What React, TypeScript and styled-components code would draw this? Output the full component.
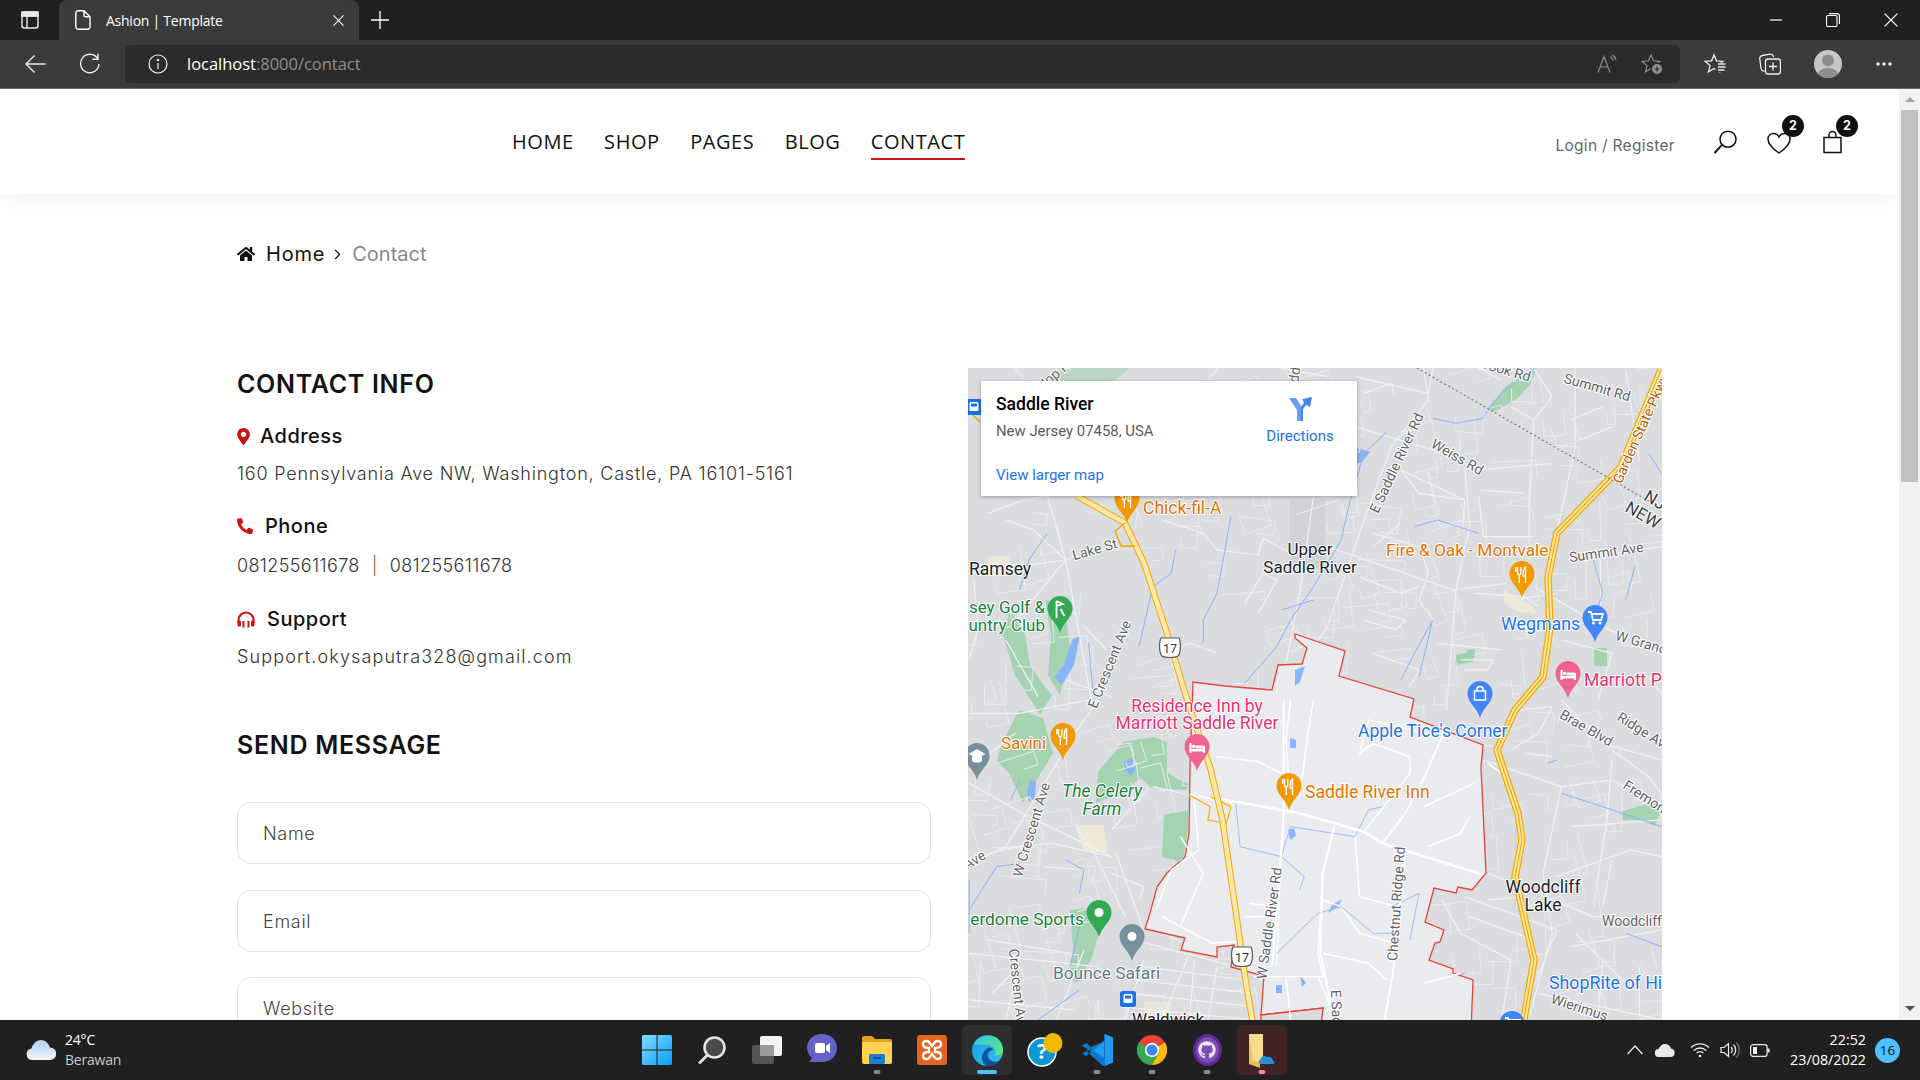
import React from "react";
import styled, { createGlobalStyle } from "styled-components";
import { FaHome, FaMapMarkerAlt, FaPhoneAlt, FaGithub } from "react-icons/fa";
import { ChevronRight } from "lucide-react";

const Global = createGlobalStyle`
  html, body { margin: 0; padding: 0; height: 100%; overflow: hidden; background: #fff; }
  * { box-sizing: border-box; }
`;
const CHROME = `"Open Sans", "Noto Sans", sans-serif`;
const SITE = `Inter, "Liberation Sans", sans-serif`;

const Shell = styled.div`display:flex;flex-direction:column;width:1920px;height:1080px;overflow:hidden;`;
const TabRow = styled.div`display:flex;align-items:stretch;height:40px;background:#202020;color:#fff;font-family:${CHROME};`;
const TabSide = styled.div`width:59px;display:flex;align-items:center;justify-content:center;`;
const Tab = styled.div`width:300px;background:#3b3b3b;border-radius:8px 8px 0 0;display:flex;align-items:center;padding:0 15px 0 16px;gap:15px;`;
const TabTitle = styled.span`flex:1;font-size:14px;letter-spacing:-.25px;white-space:nowrap;`;
const NewTab = styled.div`width:42px;display:flex;align-items:center;justify-content:center;`;
const WinControls = styled.div`margin-left:auto;display:flex;align-items:center;padding-right:22px;gap:44px;`;
const Toolbar = styled.div`height:49px;background:#3b3b3b;border-bottom:1px solid #6a6a6a;display:flex;align-items:center;font-family:${CHROME};padding-bottom:1px;`;
const NavButtons = styled.div`width:125px;display:flex;align-items:center;gap:33px;padding-left:25px;`;
const AddressBar = styled.div`width:1555px;height:38px;background:#2b2b2b;border-radius:6px;display:flex;align-items:center;padding:0 17px 0 23px;`;
const Url = styled.div`margin-left:19px;font-size:16.5px;letter-spacing:-.02px;color:#fff;flex:1;`;
const UrlMuted = styled.span`color:#8f8f8f;`;
const AddrIcons = styled.div`display:flex;align-items:center;gap:24px;`;
const ToolIcons = styled.div`display:flex;align-items:center;margin-left:24px;gap:33px;`;
const Avatar = styled.div`width:28px;height:28px;border-radius:50%;background:#c8c6c4;overflow:hidden;margin-left:33px;`;
const MoreBtn = styled.span`display:flex;margin-left:34px;`;

const Viewport = styled.div`flex:1;min-height:0;display:flex;background:#fff;`;
const Page = styled.main`width:1899px;overflow:hidden;`;
const SiteHeader = styled.header`height:105px;display:flex;align-items:center;padding:0 54px 0 512px;box-shadow:0 0 25px rgba(0,0,0,.07);position:relative;`;
const Nav = styled.nav`display:flex;gap:30.5px;padding-top:1px;`;
const NavLink = styled.a<{ $active?: boolean }>`
  position:relative;font-family:"Open Sans",sans-serif;font-size:20px;letter-spacing:.55px;color:#111;line-height:26px;
  ${p => p.$active ? `&::after{content:"";position:absolute;left:0;right:0;bottom:-5px;height:2.5px;background:#ca1515;}` : ""}
`;
const HeaderRight = styled.div`margin-left:auto;display:flex;align-items:center;gap:30px;`;
const Login = styled.a`font-family:${SITE};font-size:15.5px;color:#666;margin-right:8px;padding-top:7px;letter-spacing:.3px;`;
const HeadIcon = styled.div`position:relative;width:24px;height:24px;`;
const Badge = styled.span`position:absolute;left:15px;top:-15px;width:22px;height:22px;border-radius:50%;background:#111;color:#fff;font:700 12.5px/22px ${SITE};text-align:center;`;

const Container = styled.div`width:1425px;margin:0 auto;`;
const Crumbs = styled.div`display:flex;align-items:center;height:20px;margin-top:50px;margin-bottom:104px;font-family:${SITE};font-size:20px;color:#111;`;
const CrumbHome = styled.span`margin-left:11px;letter-spacing:.8px;font-weight:400;`;
const CrumbSep = styled.span`display:flex;margin:0 6px 0 4px;`;
const CrumbNow = styled.span`color:#888;`;
const Grid = styled.div`display:grid;grid-template-columns:694px 694px;gap:37px;`;
const LeftCol = styled.div`padding-top:1px;`;
const Heading = styled.h2<{ $top?: number }>`margin:${p => p.$top ?? 0}px 0 0;font:600 25px/30px ${SITE};color:#111;letter-spacing:.7px;`;
const Info = styled.section`margin-top:24px;`;
const InfoBlock = styled.div`margin-bottom:27.5px;`;
const Label = styled.div<{ $nudge?: number }>`display:flex;align-items:center;font:500 20px/26px ${SITE};color:#111;height:26px;margin-top:${p => -(p.$nudge ?? 0)}px;margin-bottom:${p => 12 + (p.$nudge ?? 0)}px;letter-spacing:.5px;`;
const LabelIcon = styled.span<{ $gap: number; $pull?: number }>`display:flex;color:#ca1515;margin-right:${p => p.$gap}px;margin-left:${p => p.$pull ?? 0}px;`;
const Body = styled.p<{ $ls: number }>`margin:0;font:300 18px/26px ${SITE};color:#333;letter-spacing:${p => p.$ls}px;white-space:nowrap;`;
const Sep = styled.span`color:#8a5a2a;margin:0 12px;`;
const Form = styled.form`display:flex;flex-direction:column;gap:25.5px;margin-top:42px;`;
const Field = styled.input`height:62px;width:100%;border:1.5px solid #e3e3e3;border-radius:14px;padding:1px 25px 0;font:400 18px ${SITE};outline:none;background:#fff;
  &::placeholder{color:#444;opacity:1;font-weight:300;letter-spacing:.7px;}`;
const MapBox = styled.div`position:relative;height:700px;background:#dadce0;overflow:hidden;`;
const MapSvg = styled.svg`display:block;`;
const Popup = styled.div`position:absolute;left:13px;top:13px;width:376px;height:115px;background:#fff;box-shadow:0 1px 4px rgba(0,0,0,.3);font-family:Roboto,sans-serif;padding:12px 15px;display:grid;grid-template-columns:1fr 92px;`;
const PopTitle = styled.div`font-size:17.5px;font-weight:500;color:#000;line-height:22px;`;
const PopSub = styled.div`font-size:14.9px;color:#5b5b5b;line-height:20px;margin-top:6px;`;
const PopLink = styled.a`grid-column:1 / 3;align-self:end;font-size:15px;color:#1a73e8;line-height:18px;`;
const Dir = styled.div`display:flex;flex-direction:column;align-items:center;font-size:15px;color:#1a73e8;gap:6px;padding-top:4px;margin-right:-8px;`;

const Scrollbar = styled.div`width:21px;background:#f1f1f1;display:flex;flex-direction:column;align-items:center;`;
const ArrowUp = styled.div`height:21px;padding-top:8px;&::before{content:"";display:block;border:5px solid transparent;border-top:0;border-bottom:5px solid #a3a3a3;}`;
const Thumb = styled.div`width:17px;height:372px;background:#c1c1c1;`;
const ArrowDown = styled.div`margin-top:auto;height:18px;padding-top:4px;&::before{content:"";display:block;border:5px solid transparent;border-bottom:0;border-top:5px solid #505050;}`;

const Taskbar = styled.footer`height:60px;background:#202020;display:grid;grid-template-columns:632px auto 1fr;align-items:center;color:#fff;font-family:${CHROME};`;
const Weather = styled.div`display:flex;align-items:center;padding-left:26px;gap:9px;`;
const WeatherText = styled.div`font-size:14px;line-height:20px;letter-spacing:-.2px;`;
const WeatherSub = styled.div`color:#c8c8c8;`;
const Apps = styled.div`display:flex;gap:5px;`;
const AppBtn = styled.div<{ $bg?: string }>`position:relative;width:50px;height:50px;border-radius:5px;display:flex;align-items:center;justify-content:center;background:${p => p.$bg ?? "transparent"};`;
const Dot = styled.span<{ $c?: string; $w?: number }>`position:absolute;left:50%;bottom:1px;transform:translateX(-50%);height:4px;width:${p => p.$w ?? 7}px;border-radius:2px;background:${p => p.$c ?? "#8a8a8a"};`;
const HubBadge = styled.div`width:29px;height:32px;border-radius:50%;background:#7d4cb5;border:3px solid #5b2a93;color:#efe4fa;display:flex;align-items:center;justify-content:center;`;
const Tray = styled.div`display:flex;justify-content:flex-end;align-items:center;padding-right:20px;`;
const TrayIcon = styled.div<{ $gap?: number }>`width:20px;height:20px;display:flex;align-items:center;justify-content:center;margin-right:${p => p.$gap ?? 10}px;`;
const Clock = styled.div`width:92px;text-align:right;font-size:14.3px;line-height:20px;margin-left:-6px;`;
const Notif = styled.div`width:25px;height:25px;border-radius:50%;background:#4cc2ff;color:#111;font-size:13.5px;line-height:25px;text-align:center;margin-left:9px;`;

const S = { fill: "none", stroke: "currentColor", strokeWidth: 1.4 } as const;
const STAR = "M10 2L12.5 7.800 18.800 8.400 14 12.600 15.500 18.800 10 15.500 4.500 18.800 6 12.600 1.200 8.400 7.500 7.800Z";

const SideIcon = () => <svg width="20" height="20" viewBox="0 0 20 20" {...S} stroke="#e8e8e8"><rect x="2" y="2" width="16" height="16" rx="2.5"/><path d="M2 6h16M7 6v12" /><rect x="2" y="2" width="16" height="4" fill="#e8e8e8"/></svg>;
const DocIcon = () => <svg width="16" height="20" viewBox="0 0 16 20" {...S}><path d="M3 .8h6l6 6v10a2.4 2.4 0 0 1-2.4 2.4H3A2.4 2.4 0 0 1 .8 17V3A2.4 2.4 0 0 1 3 .8zM9 .8v4.4a1.6 1.6 0 0 0 1.6 1.6H15"/></svg>;
const Cross = ({ s = 12 }: { s?: number }) => <svg width={s} height={s} viewBox="0 0 12 12" {...S} strokeWidth={1.1}><path d="M.5.5l11 11M11.5.5l-11 11"/></svg>;
const Plus = () => <svg width="18" height="18" viewBox="0 0 18 18" {...S} strokeWidth={1.3}><path d="M9 0v18M0 9h18"/></svg>;
const Minus = () => <svg width="14" height="14" viewBox="0 0 14 14" {...S} strokeWidth={1.2}><path d="M2 7h12"/></svg>;
const Restore = () => <svg width="14" height="14" viewBox="0 0 14 14" {...S} strokeWidth={1.1}><rect x=".5" y="2.5" width="10.5" height="11" rx="1.5"/><path d="M3 .6h8a2.4 2.4 0 0 1 2.4 2.4v8"/></svg>;
const Back = () => <svg width="21" height="20" viewBox="0 0 21 20" {...S} stroke="#eee"><path d="M20.5 10H1M9.5 1.5L1 10l8.5 8.5"/></svg>;
const Refresh = () => <svg width="21" height="22" viewBox="0 0 21 22" {...S} stroke="#eee"><path d="M18.6 5.6A9.2 9.2 0 1 0 20 11M19 .8v5.4h-5.6"/></svg>;
const InfoI = () => <svg width="20" height="20" viewBox="0 0 20 20" {...S} stroke="#eee" strokeWidth={1.2}><circle cx="10" cy="10" r="9"/><path d="M10 9v6"/><circle cx="10" cy="6" r=".6" fill="#eee"/></svg>;
const ReadAloud = () => <svg width="20" height="20" viewBox="0 0 20 20" {...S} stroke="#8e8e8e" strokeWidth={1.2}><path d="M1 18.5L7 2.5l6 16M3 13h8M13 2.5a6 6 0 0 1 3 4M15 .8a8 8 0 0 1 4 5.2"/></svg>;
const StarPlus = () => <svg width="22" height="22" viewBox="0 0 22 22" {...S} stroke="#8e8e8e" strokeWidth={1.2}><path d={STAR}/><circle cx="16" cy="16" r="6.500" fill="#2b2b2b" stroke="none"/><circle cx="16" cy="16" r="5" fill="#8e8e8e" stroke="none"/><path d="M16 13.600v4.800M13.600 16h4.800" stroke="#2b2b2b"/></svg>;
const FavList = () => <svg width="22" height="22" viewBox="0 0 22 22" {...S} stroke="#f0f0f0" strokeWidth={1.3}><path d={STAR}/><rect x="11.500" y="9.800" width="11" height="9.500" fill="#3b3b3b" stroke="none"/><path d="M14 11h7.500M14 14h7.500M14 17h6.500"/></svg>;
const Collections = () => <svg width="22" height="22" viewBox="0 0 22 22" {...S} stroke="#f0f0f0" strokeWidth={1.3}><path d="M5.500 18A3 3 0 0 1 2 15.500L.8 6A3 3 0 0 1 3.500 2.500L11 1.200A3 3 0 0 1 14.500 4"/><rect x="6.500" y="6" width="15" height="15" rx="2.500"/><path d="M14 9.500v8M10 13.500h8"/></svg>;
const Dots = () => <svg width="16" height="4" viewBox="0 0 16 4" fill="#eee"><circle cx="2" cy="2" r="1.700"/><circle cx="8" cy="2" r="1.700"/><circle cx="14" cy="2" r="1.700"/></svg>;
const AvatarArt = () => <svg width="28" height="28" viewBox="0 0 28 28"><circle cx="14" cy="10.500" r="6" fill="#8f8d8b"/><ellipse cx="14" cy="25" rx="10.500" ry="7" fill="#8f8d8b"/></svg>;

const Search = () => <svg width="24" height="24" viewBox="0 0 24 24" fill="none" stroke="#111" strokeWidth="1.500"><circle cx="15" cy="9.200" r="8"/><path d="M9 14.800L1.500 23" strokeWidth="2"/></svg>;
const Heart = () => <svg width="24" height="24" viewBox="0 0 24 24" fill="none" stroke="#111" strokeWidth="1.500"><path d="M12 23C6 19 1 14.500 1 9 1 5.500 3.500 3.500 6.500 3.500 9 3.500 11 5 12 7 13 5 15 3.500 17.500 3.500 20.500 3.500 23 5.500 23 9 23 14.500 18 19 12 23z"/></svg>;
const Bag = () => <svg width="24" height="24" viewBox="0 0 24 24" fill="none" stroke="#111" strokeWidth="1.500"><path d="M3 7.500h17v15H3zM8 7.500V5a3.500 3.500 0 0 1 7 0v2.500"/></svg>;
const Headset = () => <svg width="18" height="17" viewBox="0 0 18 17" fill="none" stroke="#ca1515" strokeWidth="2.200"><path d="M1.500 12V9a7.500 7.500 0 0 1 15 0v3"/><rect x=".5" y="9.500" width="3.500" height="6" rx="1.500" fill="#ca1515" stroke="none"/><rect x="14" y="9.500" width="3.500" height="6" rx="1.500" fill="#ca1515" stroke="none"/><path d="M6.500 10v6.500M11.500 10v6.500" strokeWidth="2"/></svg>;

const Street = ({ d, c = "#eef0f2", w = 1.2 }: { d: string; c?: string; w?: number }) =>
  <polyline points={d} fill="none" stroke={c} strokeWidth={w} vectorEffect="non-scaling-stroke" strokeLinejoin="round" />;

const RESIDENTIAL: string[] = (() => {
  const out: string[] = [];
  let seed = 20220823;
  const rnd = () => { seed = (seed * 1664525 + 1013904223) % 4294967296; return seed / 4294967296; };
  for (let i = 0; i < 320; i++) {
    const x = 968 + rnd() * 694, y = 368 + rnd() * 660;
    const a = (rnd() < .5 ? -.35 : 1.2) + rnd() * .5;
    const l1 = 14 + rnd() * 34, l2 = 8 + rnd() * 22, l3 = rnd() * 24;
    const ca = Math.cos(a), sa = Math.sin(a);
    const x2 = x + ca * l1, y2 = y + sa * l1;
    const x3 = x2 - sa * l2, y3 = y2 + ca * l2;
    const x4 = x3 - ca * l3, y4 = y3 - sa * l3;
    out.push(`${x.toFixed(1)},${y.toFixed(1)} ${x2.toFixed(1)},${y2.toFixed(1)} ${x3.toFixed(1)},${y3.toFixed(1)} ${x4.toFixed(1)},${y4.toFixed(1)}`);
  }
  return out;
})();

const Z4STREETS = [
  "190,408 230,600 290,1050","20,640 230,600 340,555","230,600 170,700 110,800","440,480 530,520 560,570 650,585 660,535 720,580 800,560 1075,690 1190,670",
  "770,408 740,700 690,1050","880,480 800,800 775,850","1010,25 1020,120 940,260 880,480","860,200 1030,270 1130,330 1290,310","1100,330 1110,500 1080,690 1060,1050",
  "1130,410 1140,530 1250,530","960,330 1100,420","900,520 1000,560 1020,640 1000,720 1030,780","1250,25 1290,110 1250,180 1240,400 1240,600","1340,30 1340,260 1300,520",
  "1450,30 1480,300","1320,600 1528,560","1250,680 1400,800 1528,880","120,25 140,60","560,25 540,60","700,25 800,50","860,50 1020,100 1030,25","880,100 940,70 945,105",
  "1130,25 1180,60","1200,140 1250,180","1330,180 1400,140","1350,240 1420,200","620,730 660,640 690,660 650,760","1120,700 1230,710 1260,740","1040,850 1180,870","60,460 140,420 190,408",
  "100,480 160,510 230,600","30,660 40,800 20,900","230,960 330,1010","270,800 320,870","100,840 170,1010","440,880 500,850 560,880","900,560 960,490","870,650 960,700 1000,680","890,750 970,780 950,810 880,780",
  "900,880 1000,930 980,980","1090,900 1160,900 1150,930 1100,930","960,330 1000,400 1100,420 1095,500","1130,390 1230,400","1310,840 1420,880 1390,1020","1500,950 1528,1000","1395,600 1395,800","1200,720 1300,700"
];
const Z4WATER = [
  "1030,175 1080,190 1140,175","930,215 880,280 850,420 830,540 770,680 720,780 690,860 620,970","990,500 1040,480 1130,520","470,570 460,640 420,680 410,740 390,860","590,470 560,700 530,780 530,850",
  "190,520 150,600 130,690","1500,280 1528,340","1380,600 1400,700 1390,740","1470,620 1450,720","1030,780 990,880 960,960","1320,480 1290,520","1250,25 1180,100 1140,170","280,850 290,1000","700,750 770,720","1000,950 1028,790"
];
const Z5STREETS = [
  "300,0 250,100 100,440 20,490","20,250 150,350 330,470","420,260 500,285","330,390 410,265","20,480 120,440 200,430 330,470","340,460 400,690","250,370 300,480 360,650","180,500 270,510","330,520 400,560 390,600",
  "60,720 240,760","130,770 100,960","20,760 300,800","270,750 210,960","380,720 600,800","400,780 360,960","440,700 490,730","500,760 440,960","510,780 500,960","560,800 540,960","400,800 620,840","380,840 640,880","370,880 640,920","350,920 640,960",
  "120,810 70,880","20,900 250,930","1140,180 1310,260 1420,240 1528,310","1310,260 1270,520 1290,700 1240,950","1420,180 1410,350 1380,620","1150,520 1380,650 1528,660","1100,590 1300,690 1220,960","1050,600 1090,700 1200,780 1180,960",
  "1110,650 1230,710","1310,0 1400,130 1528,180","1430,40 1528,130","1300,530 1460,450 1528,470","1260,880 1528,960","1340,700 1450,850","1330,740 1528,690","1480,800 1480,950","1400,780 1390,950","1200,150 1260,100 1290,20 1220,30","1230,160 1290,170",
  "20,40 130,40 280,0","120,100 20,210","1420,150 1500,230 1528,280","1330,380 1528,360","1420,480 1400,620","1150,600 1230,590"
];
const Z5INNER = [
  "430,620 460,510 520,450 510,300","480,680 530,520 480,410","440,650 550,730 600,725","630,610 690,620 680,650 620,650","690,800 700,420","720,310 710,120 720,0","770,0 760,80 740,290","560,170 650,185 700,220",
  "640,830 790,830 780,760 790,520 815,380","790,760 890,790 930,840","710,830 720,960","780,830 810,930","870,590 950,620","870,160 900,130 980,170 980,220 900,360 880,395","870,160 890,60 1050,110","1010,320 1120,250",
  "860,400 870,590","1020,440 1090,400 1110,350","790,600 830,620 870,700 950,730","1010,850 1090,820","1150,190 1180,220"
];
const Z5WATER = [
  "20,630 80,500 130,490","230,480 270,510 260,580","130,240 110,300","600,300 610,440 700,470 750,530 740,570","700,470 720,380 860,410 890,330 920,320","690,760 780,640 830,620 900,700 940,700","940,620 1000,580 980,720",
  "1020,450 1110,400 1110,350","560,220 600,290","790,240 830,140 870,100","1010,860 1100,820","1310,280 1400,320 1528,380","1450,700 1528,740","20,540 20,700","260,680 240,800","170,960 260,870","1280,190 1300,180","720,0 740,60 770,40"
];

const Pin = ({ x, y, c, g }: { x: number; y: number; c: string; g: "fork" | "hotel" | "cart" | "bag" | "golf" | "grad" | "dot" }) => (
  <g transform={`translate(${x - 12.5} ${y - 37})`}>
    <path d="M12.500 37C10 27 0 22 0 12.500a12.500 12.500 0 0 1 25 0C25 22 15 27 12.500 37z" fill={c} />
    {g === "fork" && <path d="M8 6v5c0 2 1 3 1.800 3v8M6.300 6v5M11.300 6v5c0 2-.7 3-1.500 3M16 6c-2 1-2.500 4-2.500 9H16v7z" stroke="#fff" strokeWidth="1.400" fill="none" />}
    {g === "hotel" && <g fill="#fff"><rect x="5" y="9" width="2" height="10"/><rect x="5" y="15" width="15" height="2.500"/><rect x="18.500" y="12" width="2" height="7"/><rect x="11" y="11.500" width="8" height="3"/><circle cx="9" cy="12.500" r="1.800"/></g>}
    {g === "cart" && <path d="M5.500 7h3l2 8h8l2-6H9.500" stroke="#fff" strokeWidth="1.800" fill="none" />}
    {g === "cart" && <g fill="#fff"><circle cx="11" cy="18" r="1.600"/><circle cx="17.500" cy="18" r="1.600"/></g>}
    {g === "bag" && <path d="M7 10h11v9H7zM9.500 10V8.500a3 3 0 0 1 6 0V10" stroke="#fff" strokeWidth="1.600" fill="none" />}
    {g === "golf" && <path d="M9 5v17M9 5l6 3-6 2M13 13l4 7" stroke="#fff" strokeWidth="1.800" fill="none" />}
    {g === "grad" && <path d="M12.500 6L4 11l8.500 5 8.500-5zM7.500 14v4c3 2 7 2 10 0v-4" fill="#fff" />}
    {g === "dot" && <circle cx="12.500" cy="12.500" r="4.500" fill="#fff" />}
  </g>
);
const Shield = ({ x, y }: { x: number; y: number }) => (
  <g>
    <path d={`M${x - 9} ${y - 10}h18c2 4 2 15-1 18-3 2-13 2-16 0-3-3-3-14-1-18z`} fill="#fff" stroke="#555" strokeWidth="1.200" />
    <text x={x} y={y + 5} fontFamily="Roboto,sans-serif" fontSize="12.500" textAnchor="middle" fill="#333">17</text>
  </g>
);
const Transit = ({ x, y }: { x: number; y: number }) => (
  <g>
    <rect x={x - 8} y={y - 8} width="16" height="16" rx="2.500" fill="#1a73e8" />
    <rect x={x - 4.500} y={y - 5} width="9" height="9" rx="1.500" fill="#fff" />
    <rect x={x - 3} y={y - 3.500} width="6" height="3" fill="#1a73e8" />
  </g>
);
type L = [number, number, string, string, number, ("start" | "middle" | "end")?];
const DARK = "#202124", GREY = "#5f6368", ORG = "#e37400", PINK = "#e8336f", BLUE = "#1a73e8", GRN = "#188038", SLATE = "#5b7686";
const LABELS: L[] = [
  [1143, 514, "Chick-fil-A", ORG, 17.5],
  [1310, 555, "Upper", DARK, 17, "middle"],
  [1310, 573, "Saddle River", DARK, 17, "middle"],
  [969, 575, "Ramsey", DARK, 17.5],
  [1386, 556, "Fire & Oak - Montvale", ORG, 17.3],
  [1501, 630, "Wegmans", BLUE, 17.8],
  [1584, 686, "Marriott P", PINK, 17.5],
  [1045, 613, "sey Golf &", GRN, 17, "end"],
  [1045, 631, "untry Club", GRN, 17, "end"],
  [1197, 712, "Residence Inn by", PINK, 17.5, "middle"],
  [1197, 729, "Marriott Saddle River", PINK, 17.5, "middle"],
  [1001, 749, "Savini", ORG, 17],
  [1305, 798, "Saddle River Inn", ORG, 17.5],
  [1358, 737, "Apple Tice's Corner", BLUE, 17.5],
  [1543, 893, "Woodcliff", DARK, 17.5, "middle"],
  [1543, 911, "Lake", DARK, 17.5, "middle"],
  [1602, 926, "Woodcliff A", GREY, 14],
  [1084, 925, "erdome Sports", GRN, 17.3, "end"],
  [1053, 979, "Bounce Safari", SLATE, 17.3],
  [1549, 989, "ShopRite of Hi", BLUE, 17.8],
  [1168, 1025, "Waldwick", DARK, 17, "middle"],
];
const RLABELS: [number, number, number, string, string, number?][] = [
  [1096, 554, -16, "Lake St", GREY],
  [1114, 666, -68, "E Crescent Ave", GREY],
  [1401, 465, -65, "E Saddle River Rd", GREY],
  [1455, 461, 30, "Weiss Rd", GREY],
  [1596, 392, 16, "Summit Rd", GREY],
  [1607, 557, -8, "Summit Ave", GREY],
  [1645, 431, -66, "Garden State Pkwy", "#b06000"],
  [1299, 378, -82, "Saddle", GREY],
  [1059, 377, -40, "Hop Rd", GREY],
  [1502, 374, 16, "Brook Rd", GREY],
  [1640, 647, 16, "W Grand", GREY],
  [1584, 732, 30, "Brae Blvd", GREY],
  [1642, 736, 32, "Ridge Ave", GREY],
  [1644, 802, 33, "Fremont", GREY],
  [1578, 1012, 18, "Wierimus", GREY],
  [1036, 831, -73, "W Crescent Ave", GREY],
  [977, 864, -32, "Ave", GREY],
  [1013, 990, 84, "Crescent Ave", GREY],
  [1274, 924, -82, "W Saddle River Rd", GREY],
  [1401, 904, -86, "Chestnut Ridge Rd", GREY],
  [1332, 1017, 88, "E Saddle", GREY],
  [1652, 505, 30, "NJ", "#3c4043", 17],
  [1640, 520, 30, "NEW", "#3c4043", 17],
];
const HW17 = "M1077 496L1125 523 1144 563 1167 633 1185 693 1194 720 1210 767 1222 817 1238 927 1245 977 1254 1030";
const GSP = "M1661 370L1621 467 1557 533 1548 577 1550 627 1543 677 1515 710 1497 750 1518 813 1522 840 1515 877 1534 960 1522 1030";

const MapArt = () => (
  <MapSvg width="694" height="700" viewBox="968 368 694 700">
    <rect x="968" y="368" width="694" height="700" fill="#dadce0" />
    <g fill="#a5d3b2">
      <path d="M1010 610l15 25 5 30 12 18 10 12-12 20-25-40-12-40z" />
      <path d="M1045 600l20 5 5 45-10 45-12-20 3-40z" />
      <path d="M1488 408l18-22 22-14 8-4-4 14-14 16-24 14z" />
      <path d="M1455 655l18-3v10l-18 3zM1467 650l8-1v8h-8z" fill="#9fd0ae"/>
      <path d="M1594 648h13v18h-13z" />
      <path d="M1001 745l18-35 24 8 10 35-30 50-14-30-12-12z" />
      <path d="M1098 772l25-30 30-5 14 5v30l12 8 10 4-3 6-35-2-10-10-20 15-25 10z" />
      <path d="M1070 910l18-2 12 20-8 30-15 25-8-5 4-30z" />
      <path d="M1060 368h70l-15 12-30 8-25-2z" fill="#bcd7c7"/>
      <path d="M1620 812l20-6 15-4 5 10-5 14-15-6-18 0z" />
    </g>
    <g fill="#8ab4f8">
      <path d="M1072 640l-8 25-10 12 8 8 12-20 6-30z" />
      <path d="M1030 780l6 2-1 16-6 4-2-10z" />
      <path d="M1124 762l8-4 5 8-6 10-6-6z" />
      <path d="M1340 458l18-10 12 4-8 10-14 4z" />
    </g>
    <path d="M1075 825h28l5 27h-24z" fill="#efe8d5" />
    <path d="M1144 1002h27v20h-27zM987 557l22-2 2 20-22 2z" fill="#efe8d5" opacity=".8" />
    <path d="M1504 590l28 16 6 8-20-2-14-10z" fill="#efe8d5" />
    <rect x="1290" y="500" width="35" height="70" fill="#d0d2d6" />
    {RESIDENTIAL.map((d, i) => <Street key={i} d={d} c="#e8eaed" w={1} />)}
    <g transform="translate(960 360) scale(.4591 .3333)">
      {Z4STREETS.map((d, i) => <Street key={i} d={d} />)}
      {Z4WATER.map((d, i) => <Street key={i} d={d} c="#8ab4f8" w={1} />)}
    </g>
    <g transform="translate(960 700) scale(.4591 .3333)">
      {Z5STREETS.map((d, i) => <Street key={i} d={d} />)}
      {Z5WATER.map((d, i) => <Street key={i} d={d} c="#8ab4f8" w={1} />)}
    </g>
    <path
      d="M1295 634L1345 651 1339 676 1414 699 1410 717 1483 745 1481 767 1486 873 1472 890 1458 887 1456 893 1434 888 1425 922 1444 930 1440 942 1435 943 1429 960 1453 969 1453 973 1473 980 1470 1060 1300 1060 1323 1008 1261 1015 1264 976 1231 967 1234 945 1217 947 1217 957 1181 950 1185 938 1145 929 1150 913 1157 887 1167 873 1185 857 1189 833 1190 767 1193 682 1225 686 1272 690 1278 665 1302 664 1307 648 1295 638z"
      fill="#e9ebee" stroke="#ea4335" strokeWidth="1.300" />
    <path d="M1323 1008l-2 18h-60l0-11z" fill="#dadce0" stroke="#ea4335" strokeWidth="1.300" />
    <g fill="#a5d3b2"><path d="M1164 815l25-5-2 30-5 22-20-5z" /></g>
    <g fill="#8ab4f8"><path d="M1290 738l6 2v8h-6zM1288 830l6-2 2 8-6 4zM1300 975l6 8-4 4zM1276 985l6 0v8h-6zM1332 905l10-6-4 8-10 6zM1295 670l10-4-5 16-5 4z" /></g>
    <g transform="translate(960 700) scale(.4591 .3333)">
      {Z5INNER.map((d, i) => <Street key={i} d={d} c="#fff" w={1.400} />)}
      {Z5WATER.slice(3, 7).map((d, i) => <Street key={i} d={d} c="#9cc0f9" w={1} />)}
      <Street d="500,285 620,310 740,340 880,395 920,430 1140,525" c="#fff" w={2.600} />
      <Street d="920,430 970,340 1010,235 1050,110" c="#fff" w={1.800} />
      <Street d="970,450 945,800 925,960" c="#fff" w={1.800} />
      <Street d="705,0 705,340 700,450 680,800" c="#fff" w={2} />
      <Street d="815,380 790,520 785,760 810,930" c="#fff" w={2} />
      <Street d="500,285 545,320 540,360 580,370 590,320 545,290" c="#f9ab00" w={1.200} />
    </g>
    <g fill="none" strokeLinejoin="round">
      <path d={HW17} stroke="#f2a900" strokeWidth="6.500" />
      <path d={HW17} stroke="#fbe7a8" strokeWidth="4.500" />
      <path d="M968 410L980 422 M1125 523l-10 8 6 15 14 0" stroke="#f2a900" strokeWidth="1.400" />
      <path d={GSP} stroke="#f2a900" strokeWidth="7.500" />
      <path d={GSP} stroke="#fbe7a8" strokeWidth="5" />
      <path d={GSP} stroke="#f2a900" strokeWidth="1.200" />
      <path d="M1417 368L1661 508" stroke="#70757a" strokeWidth="1.100" strokeDasharray="2 2.500" />
    </g>
    <Shield x={1170} y={648} />
    <Shield x={1242} y={957} />
    <Transit x={974} y={407} />
    <Transit x={1128} y={999} />
    <Pin x={1127} y={523} c="#f29900" g="fork" />
    <Pin x={1522} y={598} c="#f29900" g="fork" />
    <Pin x={1595} y={642} c="#4285f4" g="cart" />
    <Pin x={1060} y={633} c="#34a853" g="golf" />
    <Pin x={1568} y={698} c="#f06292" g="hotel" />
    <Pin x={1480} y={718} c="#4285f4" g="bag" />
    <Pin x={1063} y={760} c="#f29900" g="fork" />
    <Pin x={977} y={780} c="#78909c" g="grad" />
    <Pin x={1197} y={771} c="#f06292" g="hotel" />
    <Pin x={1289} y={810} c="#f29900" g="fork" />
    <Pin x={1099} y={937} c="#34a853" g="dot" />
    <Pin x={1132} y={961} c="#78909c" g="dot" />
    <Pin x={1512} y={1048} c="#4285f4" g="cart" />
    <g fontFamily="Roboto, sans-serif" stroke="#fff" strokeWidth="2" paintOrder="stroke" strokeLinejoin="round">
      {LABELS.map(([x, y, t, c, s, a], i) => <text key={i} x={x} y={y} fill={c} fontSize={s} textAnchor={a ?? "start"}>{t}</text>)}
      <text x={1102} y={797} fill={GRN} fontSize="17.500" fontStyle="italic" textAnchor="middle">The Celery</text>
      <text x={1102} y={815} fill={GRN} fontSize="17.500" fontStyle="italic" textAnchor="middle">Farm</text>
      {RLABELS.map(([x, y, r, t, c, s], i) => <text key={i} transform={`rotate(${r} ${x} ${y})`} x={x} y={y} fill={c} fontSize={s ?? 14} textAnchor="middle">{t}</text>)}
    </g>
  </MapSvg>
);

const WinLogo = () => <svg width="30" height="30" viewBox="0 0 30 30"><defs><linearGradient id="w" x1="0" y1="0" x2="1" y2="1"><stop offset="0" stopColor="#7fdcff"/><stop offset="1" stopColor="#0a9cf5"/></linearGradient></defs><path d="M0 1.500A1.500 1.500 0 0 1 1.500 0h13v14.500H0zM15.500 0h13A1.500 1.500 0 0 1 30 1.500v13H15.500zM0 15.500h14.500V30h-13A1.500 1.500 0 0 1 0 28.500zM15.500 15.500H30v13a1.500 1.500 0 0 1-1.500 1.500h-13z" fill="url(#w)"/></svg>;
const TaskSearch = () => <svg width="28" height="28" viewBox="0 0 28 28" fill="none"><circle cx="16.500" cy="11.500" r="10" fill="#4a4a4a" stroke="#e3e3e3" strokeWidth="2.600"/><path d="M9.500 19L2 26.500" stroke="#e3e3e3" strokeWidth="3" strokeLinecap="round"/></svg>;
const TaskView = () => <svg width="30" height="28" viewBox="0 0 30 28"><rect x="0" y="9" width="22" height="19" rx="2" fill="#555"/><rect x="8" y="0" width="22" height="20" rx="2" fill="#f4f4f4"/><rect x="8" y="9" width="14" height="11" fill="#9a9a9a"/></svg>;
const Teams = () => <svg width="30" height="32" viewBox="0 0 30 32"><path d="M15 0c8.500 0 15 6 15 14s-6.500 14-15 14H2l3-4C2 21 0 18 0 14 0 6 6.500 0 15 0z" fill="#6264c8"/><rect x="8" y="9" width="10" height="10" rx="2" fill="#fff"/><path d="M19 12l4-3v10l-4-3z" fill="#fff"/></svg>;
const Explorer = () => <svg width="30" height="28" viewBox="0 0 30 28"><path d="M0 2a2 2 0 0 1 2-2h8l3 3h15a2 2 0 0 1 2 2v4H0z" fill="#e0a21c"/><path d="M0 6h30v20a2 2 0 0 1-2 2H2a2 2 0 0 1-2-2z" fill="#ffd34f"/><rect x="7" y="18" width="16" height="10" rx="1.500" fill="#1a7fd4"/><rect x="11" y="21" width="8" height="2" fill="#0d4f8f"/></svg>;
const Xampp = () => <svg width="30" height="30" viewBox="0 0 30 30"><rect width="30" height="30" rx="3" fill="#e2641f"/><path d="M6 9c0-3 4-4 6-2l3 4 3-4c2-2 6-1 6 2s-2 4-5 4h-1v4h1c3 0 5 1 5 4s-4 4-6 2l-3-4-3 4c-2 2-6 1-6-2s2-4 5-4h1v-4h-1c-3 0-5-1-5-4z" fill="none" stroke="#fff" strokeWidth="2.400"/></svg>;
const Edge = () => <svg width="31" height="31" viewBox="0 0 31 31"><defs><linearGradient id="e1" x1="0" y1="0" x2="1" y2="0"><stop offset="0" stopColor="#0c59a4"/><stop offset="1" stopColor="#114a8b"/></linearGradient><linearGradient id="e2" x1="0" y1="0" x2="1" y2="1"><stop offset="0" stopColor="#1b9de2"/><stop offset="1" stopColor="#35c1f1"/></linearGradient><linearGradient id="e3" x1="0" y1="0" x2="1" y2="1"><stop offset="0" stopColor="#35c1f1"/><stop offset="1" stopColor="#66eb6e"/></linearGradient></defs><circle cx="15.500" cy="15.500" r="15.500" fill="url(#e2)"/><path d="M2 9C6 1 16-1 23 2c5 2 8 8 8 13 0 4-4 6-8 5 2-4-1-10-7-10C10 9 5 10 2 9z" fill="url(#e3)"/><path d="M15 31c-7-2-7-14 1-18 2-1 5 0 5 2-3 0-6 3-5 7 1 3 5 6 11 4-3 3-7 6-12 5z" fill="url(#e1)"/></svg>;
const Help = () => <svg width="42" height="34" viewBox="-6 0 42 34"><circle cx="15" cy="19" r="14" fill="#0b97d4" stroke="#fff" strokeWidth="1.500"/><text x="15" y="26" fontFamily="Open Sans,sans-serif" fontWeight="700" fontSize="21" textAnchor="middle" fill="#fff">?</text><ellipse cx="26" cy="10" rx="9.500" ry="10" fill="#f5b800"/></svg>;
const VSCode = () => <svg width="31" height="32" viewBox="0 0 31 32"><path d="M23 0l8 3.500v25L23 32 8 17l15-11z" fill="#1f9cf0"/><path d="M23 0v32l-1-1V1z" fill="#0b6fc0"/><path d="M23 7L9 18l-5 4L0 19.500 6 16 0 11.500 4 9l5 4zM23 25L10 15 5 17.500 21 32l2-1z" fill="#0e78c8"/></svg>;
const Chrome = () => <svg width="30" height="30" viewBox="0 0 30 30"><circle cx="15" cy="15" r="15" fill="#ea4335"/><path d="M15 15L2 7.500A15 15 0 0 0 15 30l7.500-13z" fill="#34a853"/><path d="M15 15l13-7.500A15 15 0 0 1 15 30l7.500-13z" fill="#fbbc04"/><circle cx="15" cy="15" r="7.200" fill="#fff"/><circle cx="15" cy="15" r="5.500" fill="#4285f4"/></svg>;
const Folder2 = () => <svg width="26" height="36" viewBox="0 0 26 36"><path d="M0 2l11 3v31L0 32z" fill="#e8c25e"/><path d="M0 2h14v27H4z" fill="#f9dc8a"/><path d="M11 28c1-4 5-5 7-3 3-1 6 1 6 4 2 0 2 3 0 3H12c-2 0-3-3-1-4z" fill="#2a8fdc"/></svg>;

const Cloud = () => <svg width="30" height="20" viewBox="0 0 30 20"><defs><linearGradient id="c" x1="0" y1="0" x2="0" y2="1"><stop offset="0" stopColor="#b5d0f2"/><stop offset="1" stopColor="#f0f4f9"/></linearGradient></defs><path d="M6 20a5.800 5.800 0 0 1-.5-11.500C7 3 11 0 15 0s7.500 3 9 7.500A6.200 6.200 0 0 1 24 20z" fill="url(#c)"/></svg>;
const TrayUp = () => <svg width="16" height="10" viewBox="0 0 16 10" fill="none" stroke="#eee" strokeWidth="1.200"><path d="M.5 9L8 1l7.500 8"/></svg>;
const TrayCloud = () => <svg width="20" height="13" viewBox="0 0 20 13" fill="#e8e8e8"><path d="M4 13a4 4 0 0 1-.5-8C5 2 7 0 10 0c3 0 5 2 6 4.500A4.300 4.300 0 0 1 16 13z"/></svg>;
const Wifi = () => <svg width="20" height="16" viewBox="0 0 20 16" fill="none" stroke="#eee" strokeWidth="1.400"><path d="M1 5.500a13 13 0 0 1 18 0M3.800 8.500a9 9 0 0 1 12.400 0M6.600 11a5 5 0 0 1 6.800 0"/><circle cx="10" cy="14" r="1.300" fill="#eee" stroke="none"/></svg>;
const Speaker = () => <svg width="20" height="18" viewBox="0 0 20 18" fill="none" stroke="#eee" strokeWidth="1.200"><path d="M1 6.500h3l4.500-4v13L4 11.500H1z"/><path d="M11 6a4.500 4.500 0 0 1 0 6M13.500 3.500a8 8 0 0 1 0 11" /><path d="M16.500 1.500a11.500 11.500 0 0 1 0 15" stroke="#777"/></svg>;
const Battery = () => <svg width="20" height="13" viewBox="0 0 20 13" fill="none" stroke="#eee" strokeWidth="1.200"><rect x=".6" y=".6" width="16.500" height="11.800" rx="2.500"/><rect x="3" y="3" width="4" height="7" fill="#eee" stroke="none"/><path d="M18.500 4.500v4" strokeWidth="2"/></svg>;

export default function App() {
  return (
    <Shell>
      <Global />
      <TabRow>
        <TabSide><SideIcon /></TabSide>
        <Tab>
          <DocIcon />
          <TabTitle>Ashion | Template</TabTitle>
          <Cross s={11} />
        </Tab>
        <NewTab><Plus /></NewTab>
        <WinControls><Minus /><Restore /><Cross s={14} /></WinControls>
      </TabRow>
      <Toolbar>
        <NavButtons><Back /><Refresh /></NavButtons>
        <AddressBar>
          <InfoI />
          <Url>localhost<UrlMuted>:8000/contact</UrlMuted></Url>
          <AddrIcons><ReadAloud /><StarPlus /></AddrIcons>
        </AddressBar>
        <ToolIcons><FavList /><Collections /></ToolIcons>
        <Avatar><AvatarArt /></Avatar>
        <MoreBtn><Dots /></MoreBtn>
      </Toolbar>
      <Viewport>
        <Page>
          <SiteHeader>
            <Nav>
              <NavLink>HOME</NavLink>
              <NavLink>SHOP</NavLink>
              <NavLink>PAGES</NavLink>
              <NavLink>BLOG</NavLink>
              <NavLink $active>CONTACT</NavLink>
            </Nav>
            <HeaderRight>
              <Login>Login / Register</Login>
              <HeadIcon><Search /></HeadIcon>
              <HeadIcon><Heart /><Badge>2</Badge></HeadIcon>
              <HeadIcon><Bag /><Badge>2</Badge></HeadIcon>
            </HeaderRight>
          </SiteHeader>
          <Container>
            <Crumbs>
              <FaHome size={18} />
              <CrumbHome>Home</CrumbHome>
              <CrumbSep><ChevronRight size={17} strokeWidth={1.6} /></CrumbSep>
              <CrumbNow>Contact</CrumbNow>
            </Crumbs>
            <Grid>
              <LeftCol>
                <Heading>CONTACT INFO</Heading>
                <Info>
                  <InfoBlock>
                    <Label><LabelIcon $gap={8} $pull={-2}><FaMapMarkerAlt size={17} /></LabelIcon>Address</Label>
                    <Body $ls={.79}>160 Pennsylvania Ave NW, Washington, Castle, PA 16101-5161</Body>
                  </InfoBlock>
                  <InfoBlock>
                    <Label $nudge={1.5}><LabelIcon $gap={12}><FaPhoneAlt size={16} /></LabelIcon>Phone</Label>
                    <Body $ls={.37}>081255611678<Sep>|</Sep>081255611678</Body>
                  </InfoBlock>
                  <InfoBlock>
                    <Label><LabelIcon $gap={12}><Headset /></LabelIcon>Support</Label>
                    <Body $ls={1.12}>Support.okysaputra328@gmail.com</Body>
                  </InfoBlock>
                </Info>
                <Heading $top={60}>SEND MESSAGE</Heading>
                <Form>
                  <Field placeholder="Name" />
                  <Field placeholder="Email" />
                  <Field placeholder="Website" />
                </Form>
              </LeftCol>
              <MapBox>
                <MapArt />
                <Popup>
                  <div>
                    <PopTitle>Saddle River</PopTitle>
                    <PopSub>New Jersey 07458, USA</PopSub>
                  </div>
                  <Dir>
                    <svg width="24" height="24" viewBox="0 0 24 24"><path d="M1 1l7 0 5 8 3-3-2-4 9-2-2 10-3-3-3 4v13H9V13z" fill="#6b9cf2"/><path d="M24 0l-2 10-3-3-4 5v12h-2V11l4-6-2-2z" fill="#4285f4"/></svg>
                    Directions
                  </Dir>
                  <PopLink>View larger map</PopLink>
                </Popup>
              </MapBox>
            </Grid>
          </Container>
        </Page>
        <Scrollbar>
          <ArrowUp />
          <Thumb />
          <ArrowDown />
        </Scrollbar>
      </Viewport>
      <Taskbar>
        <Weather>
          <Cloud />
          <WeatherText>24°C<WeatherSub>Berawan</WeatherSub></WeatherText>
        </Weather>
        <Apps>
          <AppBtn><WinLogo /></AppBtn>
          <AppBtn><TaskSearch /></AppBtn>
          <AppBtn><TaskView /></AppBtn>
          <AppBtn><Teams /></AppBtn>
          <AppBtn><Explorer /><Dot /></AppBtn>
          <AppBtn><Xampp /></AppBtn>
          <AppBtn $bg="#2e2e2e"><Edge /><Dot $c="#4cc2ff" $w={20} /></AppBtn>
          <AppBtn><Help /></AppBtn>
          <AppBtn><VSCode /><Dot /></AppBtn>
          <AppBtn><Chrome /><Dot /></AppBtn>
          <AppBtn><HubBadge><FaGithub size={18} /></HubBadge><Dot /></AppBtn>
          <AppBtn $bg="#3f2325"><Folder2 /><Dot $c="#f48a9b" /></AppBtn>
        </Apps>
        <Tray>
          <TrayIcon><TrayUp /></TrayIcon>
          <TrayIcon $gap={15}><TrayCloud /></TrayIcon>
          <TrayIcon><Wifi /></TrayIcon>
          <TrayIcon><Speaker /></TrayIcon>
          <TrayIcon><Battery /></TrayIcon>
          <Clock>22:52<br />23/08/2022</Clock>
          <Notif>16</Notif>
        </Tray>
      </Taskbar>
    </Shell>
  );
}
